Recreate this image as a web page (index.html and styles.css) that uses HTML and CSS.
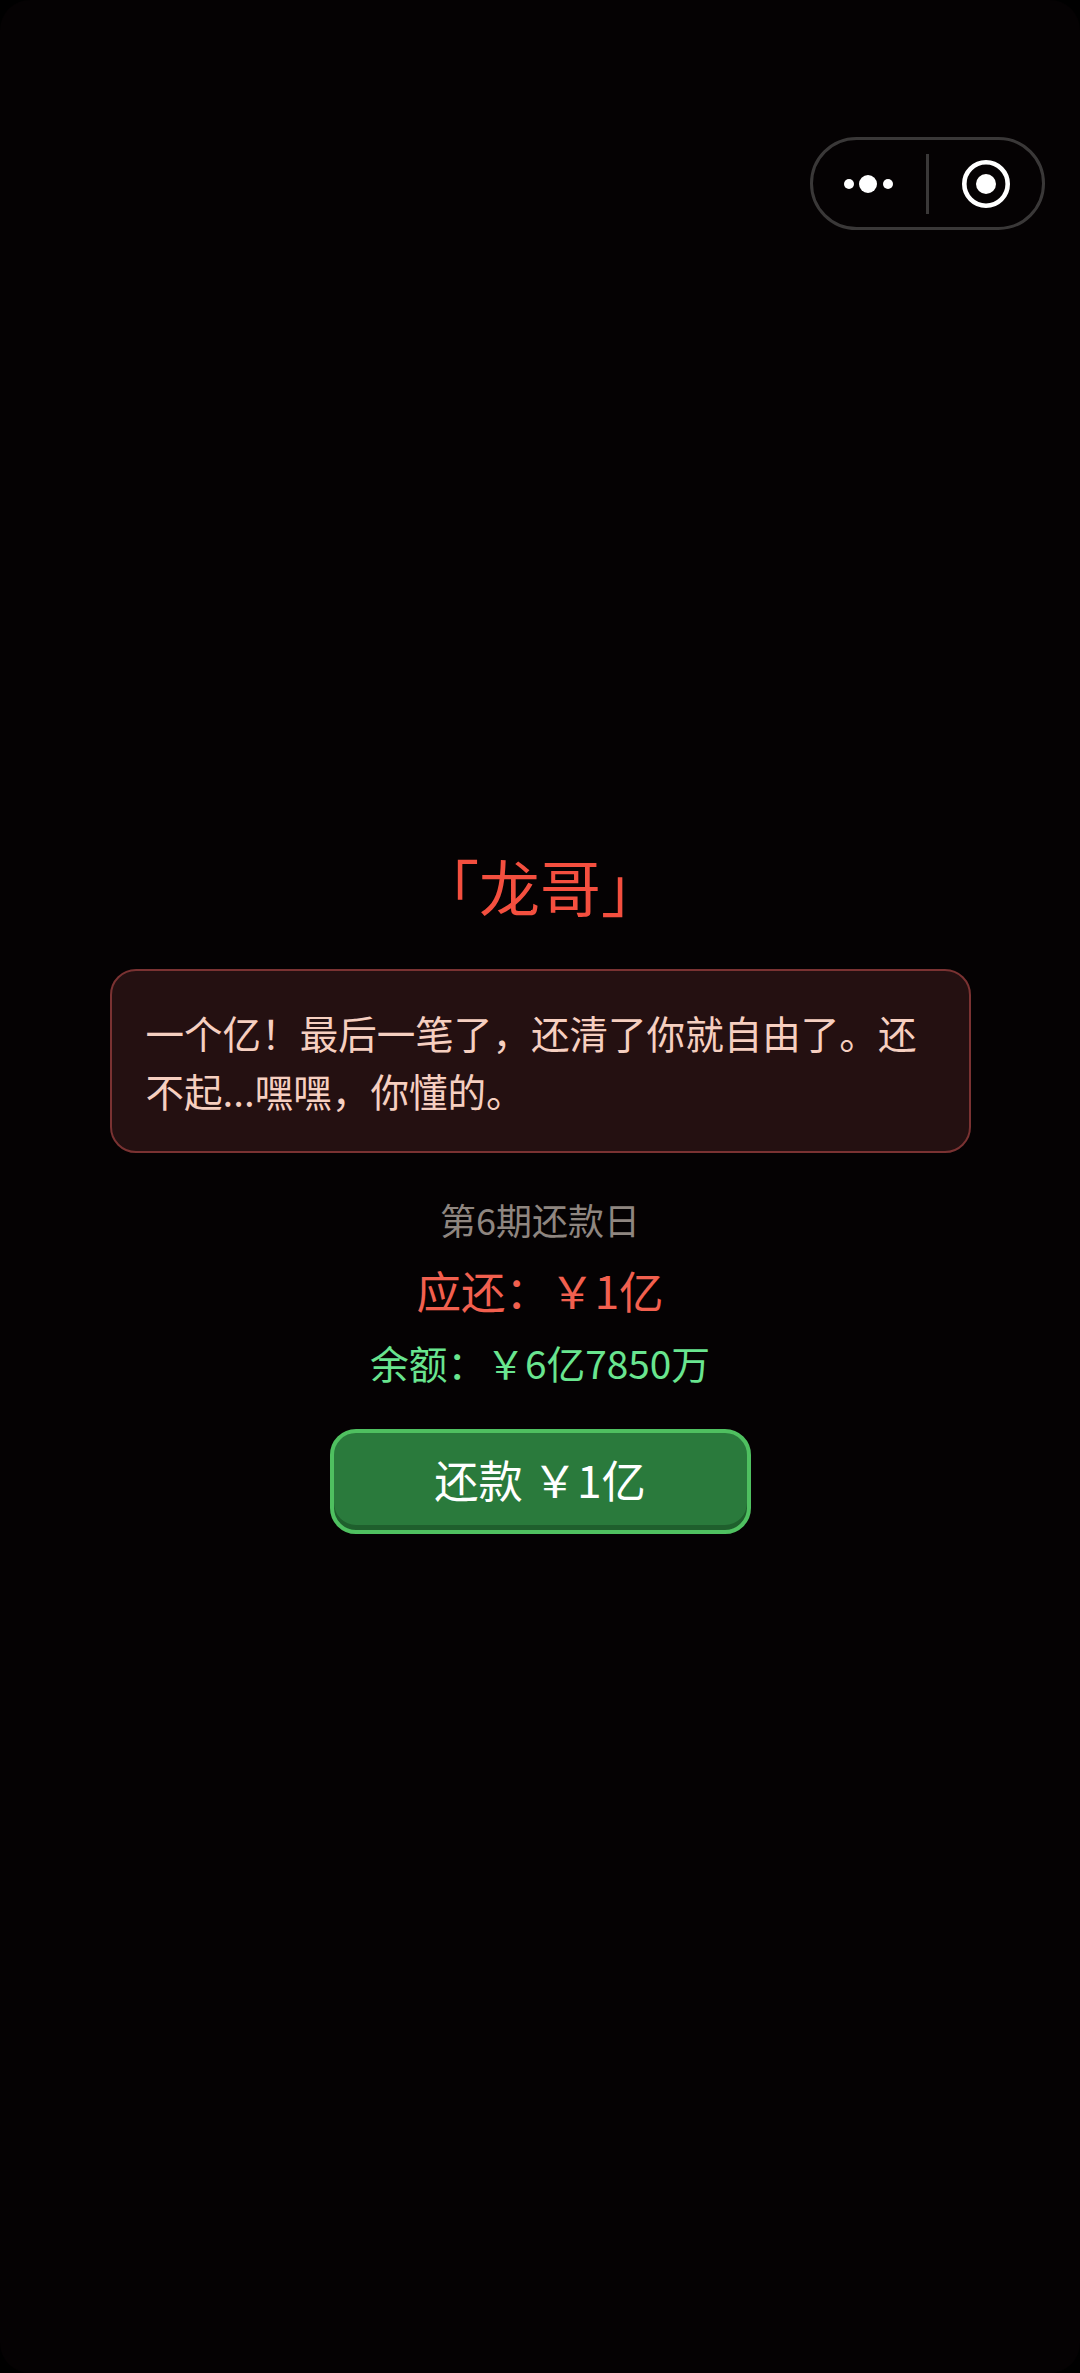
FILE: index.html
```html
<!DOCTYPE html>
<html lang="zh-CN">
<head>
<meta charset="utf-8">
<title>第6期还款日</title>
<link rel="stylesheet" href="styles.css">
</head>
<body>
<div class="capsule">
  <svg class="cap-dots" width="50" height="18" viewBox="0 0 50 18"><circle cx="5" cy="9" r="5" fill="#fff"/><circle cx="24" cy="9" r="9" fill="#fff"/><circle cx="44" cy="9" r="5" fill="#fff"/></svg>
  <span class="cap-line"></span>
  <svg class="cap-target" width="50" height="50" viewBox="0 0 50 50"><circle cx="25" cy="25" r="21.7" fill="none" stroke="#fff" stroke-width="4.6"/><circle cx="25" cy="25" r="10" fill="#fff"/></svg>
</div>
<main class="scene">
  <h1 class="speaker">「龙哥」</h1>
  <p class="dialog">一个亿！最后一笔了，还清了你就自由了。还不起...嘿嘿，你懂的。</p>
  <p class="period">第6期还款日</p>
  <p class="due">应还：￥1亿</p>
  <p class="balance">余额：￥6亿7850万</p>
  <button class="pay">还款 ￥1亿</button>
</main>
</body>
</html>
```

FILE: styles.css
```css
* { box-sizing: border-box; }
html { background: #000; }
html, body { margin: 0; }
body {
  position: relative;
  height: 2373px;
  overflow: hidden;
  padding-top: 842px;
  background: #050203;
  border-radius: 30px;
  font-family: "Noto Sans CJK SC", "Noto Sans", sans-serif;
}

/* Mini-program menu capsule */
.capsule {
  position: absolute;
  left: 810px;
  top: 137px;
  width: 235px;
  height: 93px;
  border: 3px solid #3a3838;
  border-radius: 47px;
  display: flex;
  align-items: center;
}
.cap-dots { margin-left: 31px; flex: none; }
.cap-line { width: 3px; height: 60px; background: #3a3838; margin-left: 32px; flex: none; }
.cap-target { margin-left: 32px; flex: none; }

.scene {
  display: flex;
  flex-direction: column;
  align-items: center;
}
.speaker {
  margin: 0 0 39px;
  font-size: 60.9px;
  line-height: 88px;
  font-weight: 400;
  color: #f44f3f;
}
.dialog {
  margin: 0 0 39px;
  width: 861px;
  height: 184px;
  padding: 32px 34px;
  font-size: 38.55px;
  line-height: 58px;
  color: #f6cfc0;
  background: #241011;
  border: 2px solid #7a3232;
  border-radius: 26px;
}
.period { margin: 0 0 12px; font-size: 36px; line-height: 54px; color: #8f8680; }
.due { margin: 0 0 12px; font-size: 44.5px; line-height: 64px; color: #f2604f; }
.balance { margin: 0 0 39px; font-size: 38.77px; line-height: 56px; color: #69e58f; }
.pay {
  width: 421px;
  height: 105px;
  padding: 0 0 5px;
  font: inherit;
  font-size: 44.3px;
  color: #fff;
  background: #2a7a3c;
  border: 4px solid #4fc060;
  border-radius: 26px;
  box-shadow: inset 0 -5px 0 #1f5f2d;
}
```
